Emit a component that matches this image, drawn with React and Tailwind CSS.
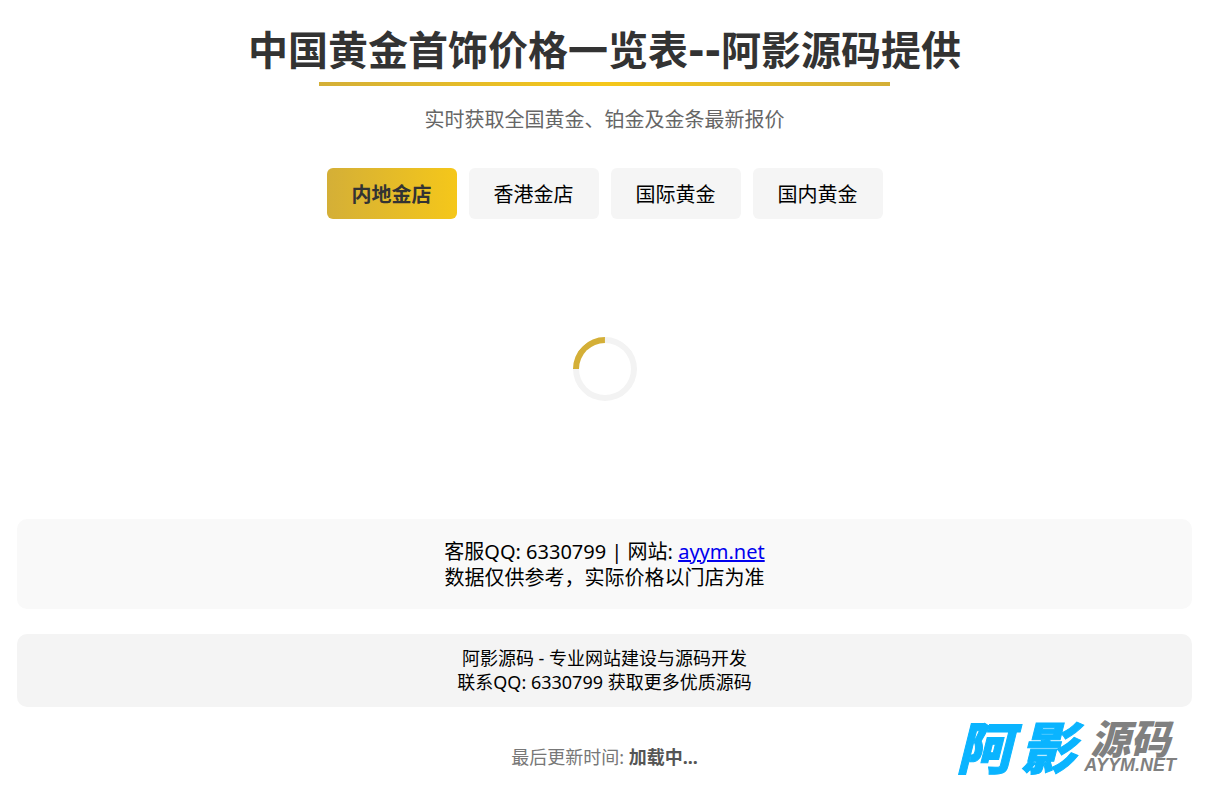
import { useState } from 'react';

const tabs = ['内地金店', '香港金店', '国际黄金', '国内黄金'];

function Header() {
  return (
    <header className="flex flex-col items-center text-center">
      <div className="flex flex-col items-center">
        <h1 className="text-[40px] leading-[52px] font-bold text-[#333333]">
          中国黄金首饰价格一览表
          <span className="font-['DejaVu_Sans']">--</span>
          阿影源码提供
        </h1>
        <div className="mt-[5px] h-1 w-4/5 bg-[linear-gradient(90deg,#d4af37,#f5c71a,#d4af37)]" />
      </div>
      <p className="mt-5 text-xl leading-7 text-[#666666]">
        实时获取全国黄金、铂金及金条最新报价
      </p>
    </header>
  );
}

function Watermark() {
  return (
    <div className="absolute right-[38px] bottom-4 flex items-end gap-1 italic font-black select-none">
      <span className="mr-1 flex gap-2 text-[56px] leading-[52px] text-[#0ab4ff] [-webkit-text-stroke:1px_#0ab4ff]">
        <span>阿</span>
        <span>影</span>
      </span>
      <span className="flex flex-col items-center text-[#808080]">
        <span className="text-[40px] leading-9">源码</span>
        <span className="font-['Liberation_Sans'] text-lg leading-4">AYYM.NET</span>
      </span>
    </div>
  );
}

export default function App() {
  const [active, setActive] = useState(tabs[0]);

  return (
    <div className="relative min-h-screen bg-white pt-6 pr-[22px] pb-[19px] pl-[17px] font-['Noto_Sans','Noto_Sans_CJK_SC',sans-serif] text-black">
      <Header />

      <nav className="mt-[34px] flex justify-center gap-3">
        {tabs.map((tab) => (
          <button
            key={tab}
            type="button"
            onClick={() => setActive(tab)}
            className={
              active === tab
                ? 'h-[51px] rounded-md px-[25px] pt-0.5 text-xl font-bold text-[#333333] bg-[linear-gradient(90deg,#d4af37,#f5c71a)]'
                : 'h-[51px] rounded-md px-[25px] pt-0.5 text-xl bg-[#f5f5f5]'
            }
          >
            {tab}
          </button>
        ))}
      </nav>

      <main className="flex h-[300px] items-center justify-center">
        <div
          role="status"
          aria-label="加载中"
          className="size-16 rotate-[-45deg] rounded-full border-6 border-[#f3f3f3] border-t-[#d4af37]"
        />
      </main>

      <section className="rounded-[10px] bg-[#f9f9f9] pt-5 pb-[18px] text-center text-xl leading-[26px]">
        <p>
          客服QQ: 6330799 | 网站:{' '}
          <a href="https://ayym.net" className="text-[#0000ee] underline">
            ayym.net
          </a>
        </p>
        <p>数据仅供参考，实际价格以门店为准</p>
      </section>

      <section className="mt-[25px] rounded-[10px] bg-[#f4f4f4] pt-3 pb-[13px] text-center text-lg leading-6">
        <p>阿影源码 - 专业网站建设与源码开发</p>
        <p>联系QQ: 6330799 获取更多优质源码</p>
      </section>

      <footer className="mt-[38px] text-center text-lg leading-6 text-[#777777]">
        最后更新时间: <strong className="text-[#555555]">加载中...</strong>
      </footer>

      <Watermark />
    </div>
  );
}
